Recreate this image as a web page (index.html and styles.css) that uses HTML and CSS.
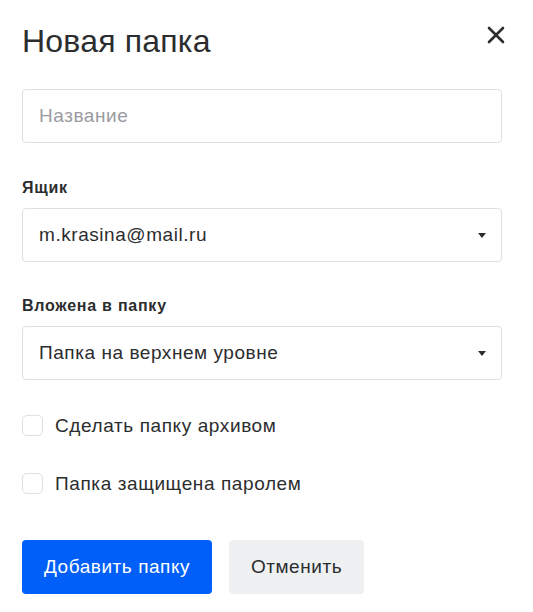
FILE: index.html
```html
<!DOCTYPE html>
<html lang="ru">
<head>
<meta charset="utf-8">
<link rel="stylesheet" href="styles.css">
</head>
<body>
<div class="dialog">
  <div class="header">
    <h1 class="title">Новая папка</h1>
    <button class="close" aria-label="Закрыть">
      <svg width="18" height="18" viewBox="0 0 18 18"><path d="M2 2 L16 16 M16 2 L2 16" stroke="#2c2d2e" stroke-width="2.6" stroke-linecap="round"/></svg>
    </button>
  </div>
  <div class="field name-field">
    <div class="input placeholder">Название</div>
  </div>
  <div class="field">
    <div class="label">Ящик</div>
    <div class="input select">m.krasina@mail.ru<span class="arrow"></span></div>
  </div>
  <div class="field">
    <div class="label">Вложена в папку</div>
    <div class="input select">Папка на верхнем уровне<span class="arrow"></span></div>
  </div>
  <div class="checks">
    <label class="check"><span class="box"></span>Сделать папку архивом</label>
    <label class="check"><span class="box"></span>Папка защищена паролем</label>
  </div>
  <div class="buttons">
    <button class="btn primary">Добавить папку</button>
    <button class="btn secondary">Отменить</button>
  </div>
</div>
</body>
</html>
```
FILE: styles.css
```css
* { box-sizing: border-box; }
html, body { margin: 0; padding: 0; background: #fff; }
body { font-family: "Liberation Sans", Arial, sans-serif; color: #2c2d2e; }
.dialog { width: 533px; padding: 20px 31px 0 22px; }
.header { display: flex; justify-content: space-between; align-items: flex-start; height: 69px; }
.title { margin: 0; font-size: 32px; letter-spacing: 0.2px; font-weight: 400; line-height: 42px; color: #2c2d2e; }
.close { border: 0; background: none; padding: 0; margin: 6px -3px 0 0; width: 18px; height: 18px; cursor: pointer; }
.close svg { display: block; }
.field { display: flex; flex-direction: column; }
.name-field { margin-bottom: 35px; }
.label { font-size: 16px; letter-spacing: 0.75px; font-weight: 700; line-height: 20px; margin-bottom: 10px; color: #2c2d2e; }
.input { position: relative; height: 54px; border: 1px solid #dfe0e3; border-radius: 4px; padding: 0 16px; display: flex; align-items: center; font-size: 19px; letter-spacing: 0.55px; color: #2c2d2e; }
.placeholder { color: #9a9ba0; }
.select { margin-bottom: 34px; }
.arrow { position: absolute; right: 15px; top: 24px; width: 0; height: 0; border-left: 4.5px solid transparent; border-right: 4.5px solid transparent; border-top: 5px solid #2c2d2e; }
.checks { display: flex; flex-direction: column; gap: 37px; padding-top: 1px; }
.check { display: flex; align-items: center; gap: 12px; font-size: 19px; letter-spacing: 0.6px; line-height: 21px; color: #2c2d2e; }
.box { width: 21px; height: 21px; border: 1px solid #dfe0e3; border-radius: 5px; background: #fff; }
.buttons { display: flex; gap: 17px; margin-top: 46px; }
.btn { height: 54px; border: 0; border-radius: 4px; font-family: "Liberation Sans", Arial, sans-serif; font-size: 19px; letter-spacing: 0.55px; padding: 0; }
.primary { background: #005ff9; color: #fff; width: 190px; }
.secondary { background: #eff0f2; color: #2c2d2e; width: 135px; }
```
